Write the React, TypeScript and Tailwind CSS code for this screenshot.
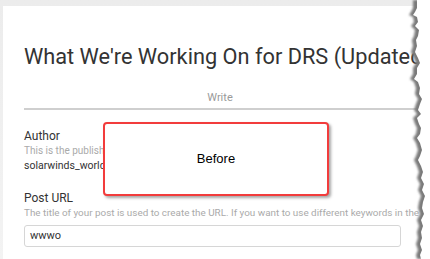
import React from "react";

const edge: [number, number][] = [
  [413, 0], [413, 8], [411, 12], [409, 15], [413, 17], [414, 22], [411, 26], [415, 30], [414, 36],
  [412, 40], [413, 46], [411, 52], [414, 58], [416, 63], [413, 68], [413, 74], [410, 79],
  [414, 82], [416, 88], [415, 94], [418, 99], [416, 104], [414, 110], [417, 114], [413, 118],
  [415, 124], [417, 128], [416, 134], [413, 138], [416, 143], [418, 150], [416, 156],
  [414, 160], [417, 166], [419, 172], [417, 178], [420, 184], [418, 190], [421, 196],
  [419, 202], [418, 208], [420, 214], [417, 220], [419, 226], [417, 232], [418, 238],
  [416, 244], [418, 250], [416, 255], [417, 259],
];

function TornEdge() {
  const pts = (dx: number) =>
    [`430,0`, ...edge.map(([x, y]) => `${x + dx},${y}`), `430,259`].join(" ");
  return (
    <svg className="absolute left-0 top-0" width={430} height={259} viewBox="0 0 430 259">
      <defs>
        <filter id="blur" x="-10%" y="-10%" width="120%" height="120%">
          <feGaussianBlur stdDeviation="0.9" />
        </filter>
      </defs>
      <polygon points={pts(0)} fill="#7a7a7a" filter="url(#blur)" />
      <polygon points={pts(4)} fill="#ffffff" />
    </svg>
  );
}

export default function App() {
  return (
    <div
      className="relative w-[430px] h-[259px] overflow-hidden bg-white"
      style={{ fontFamily: "Roboto, 'Liberation Sans', sans-serif" }}
    >
      <div className="h-full bg-gradient-to-b from-[#ececec] to-[#f3f3f3] pt-[6px] pl-[3px]">
        <div className="h-full bg-white pl-[21px] pr-[14px]">
          <div className="pt-[38px] text-[21.75px] leading-[26px] text-[#333] whitespace-nowrap">
            What We're Working On for DRS (Updated
          </div>
          <div className="mt-[21px] w-[392px] border-b-2 border-[#cfcfcf] text-center text-[11px] leading-[13px] text-[#9a9a9a] pb-[4px]">
            Write
          </div>
          <div className="mt-[19px] text-[12px] leading-[14px] text-[#333]">Author</div>
          <div className="mt-[1px] text-[10px] leading-[14px] text-[#aaa] whitespace-nowrap">
            This is the publisher of the post.
          </div>
          <div className="mt-[1px] text-[10.5px] leading-[14px] text-[#333]">solarwinds_worldwide</div>
          <div className="mt-[18px] text-[12px] leading-[14px] text-[#333]">Post URL</div>
          <div className="mt-[1px] text-[9.9px] leading-[14px] text-[#aaa] whitespace-nowrap">
            The title of your post is used to create the URL. If you want to use different keywords in the URL
          </div>
          <div className="mt-[5px] w-[377px] h-[22px] rounded-[3px] border border-[#d6d6d6] pl-[5px] text-[11px] leading-[20px] text-[#333]">
            wwwo
          </div>
        </div>
      </div>
      <div className="absolute left-[103px] top-[122px] w-[226px] h-[74px] rounded-[4px] border-2 border-[#f23c3c] bg-white shadow-[2px_2px_3px_rgba(0,0,0,0.35)] flex items-center justify-center">
        <span className="text-[13px] text-black" style={{ fontFamily: "'Liberation Sans', Arial, sans-serif" }}>
          Before
        </span>
      </div>
      <TornEdge />
    </div>
  );
}
